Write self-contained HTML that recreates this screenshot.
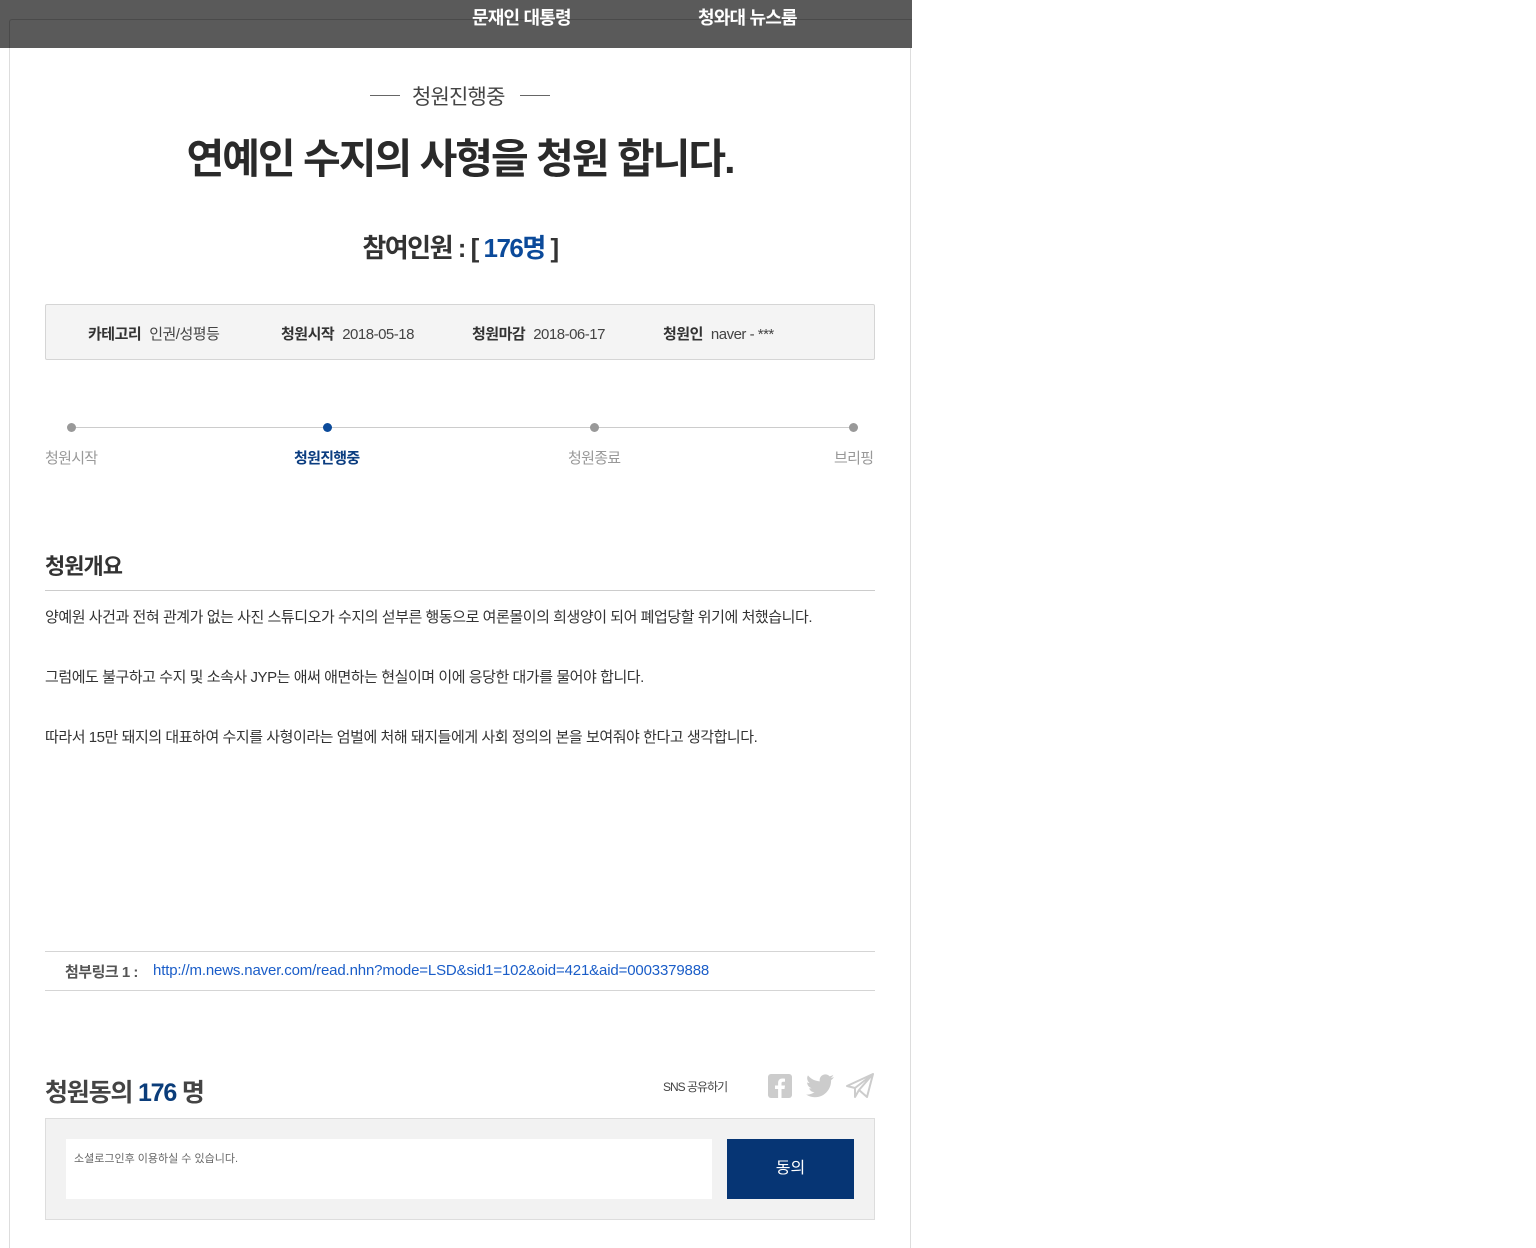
<!DOCTYPE html>
<html><head><meta charset="utf-8"><style>
*{margin:0;padding:0;box-sizing:border-box}
body{width:1536px;height:1233px;background:#fff;font-family:"Liberation Sans","Noto Sans CJK KR",sans-serif;color:#333;position:relative;overflow:hidden}
.a{position:absolute;white-space:nowrap}
.hdr{position:absolute;left:0;top:0;width:912px;height:48px;background:#5a5a5a}
.hdr .in{position:absolute;left:9px;top:19px;width:903px;height:29px;border:1px solid #4a4a4a;border-bottom:none;border-right:none;border-radius:3px 0 0 0}
.frame{position:absolute;left:9px;top:48px;width:902px;height:1200px;border-left:1px solid #ddd;border-right:1px solid #ddd}
.hd{color:#fff;font-weight:bold;font-size:18px;letter-spacing:-0.8px;top:4px}
.info{position:absolute;left:45px;top:304px;width:830px;height:56px;background:#f4f4f4;border:1px solid #d5d5d5;border-radius:2px}
.info span{position:absolute;top:18px;font-size:15px;letter-spacing:-0.5px;color:#444}
.info b{color:#333;margin-right:8px}
.dot{position:absolute;width:9px;height:9px;border-radius:50%;background:#999;top:423px}
.st{font-size:15px;color:#999;letter-spacing:-0.7px;top:447px}
.p{font-size:15px;letter-spacing:-0.45px;color:#333;left:45px}
</style></head><body>
<div class="hdr"><div class="in"></div></div>
<div class="a hd" style="left:472px">문재인 대통령</div>
<div class="a hd" style="left:698px">청와대 뉴스룸</div>
<div class="frame"></div>

<div class="a" style="left:370px;top:95px;width:30px;height:1px;background:#666"></div>
<div class="a" style="left:520px;top:95px;width:30px;height:1px;background:#666"></div>
<div class="a" style="left:412px;top:81px;font-size:21px;color:#444;letter-spacing:-0.8px">청원진행중</div>
<div class="a" style="left:0;width:920px;text-align:center;top:125px;font-size:41px;font-weight:bold;color:#2a2a2a;letter-spacing:-2px">연예인 수지의 사형을 청원 합니다.</div>
<div class="a" style="left:0;width:920px;text-align:center;top:228px;font-size:26px;font-weight:bold;color:#333;letter-spacing:-1.5px">참여인원 : [ <span style="color:#0b4a9a">176명</span> ]</div>

<div class="info">
<span style="left:42px"><b>카테고리</b>인권/성평등</span>
<span style="left:235px"><b>청원시작</b>2018-05-18</span>
<span style="left:426px"><b>청원마감</b>2018-06-17</span>
<span style="left:617px"><b>청원인</b>naver - ***</span>
</div>

<div class="a" style="left:71px;top:427px;width:782px;height:1px;background:#ccc"></div>
<div class="dot" style="left:67px"></div>
<div class="dot" style="left:323px;background:#0b4a9a"></div>
<div class="dot" style="left:590px"></div>
<div class="dot" style="left:849px"></div>
<div class="a st" style="left:45px">청원시작</div>
<div class="a st" style="left:294px;color:#0b3d80;font-weight:bold">청원진행중</div>
<div class="a st" style="left:568px">청원종료</div>
<div class="a st" style="left:834px">브리핑</div>

<div class="a" style="left:45px;top:549px;font-size:22px;font-weight:bold;color:#333;letter-spacing:-1px">청원개요</div>
<div class="a" style="left:45px;top:590px;width:830px;height:1px;background:#ccc"></div>
<div class="a p" style="top:606px">양예원 사건과 전혀 관계가 없는 사진 스튜디오가 수지의 섣부른 행동으로 여론몰이의 희생양이 되어 폐업당할 위기에 처했습니다.</div>
<div class="a p" style="top:666px">그럼에도 불구하고 수지 및 소속사 JYP는 애써 애면하는 현실이며 이에 응당한 대가를 물어야 합니다.</div>
<div class="a p" style="top:726px">따라서 15만 돼지의 대표하여 수지를 사형이라는 엄벌에 처해 돼지들에게 사회 정의의 본을 보여줘야 한다고 생각합니다.</div>

<div class="a" style="left:45px;top:951px;width:830px;height:1px;background:#d5d5d5"></div>
<div class="a" style="left:45px;top:990px;width:830px;height:1px;background:#d5d5d5"></div>
<div class="a" style="left:65px;top:961px;font-size:15px;font-weight:bold;color:#555;letter-spacing:-0.5px">첨부링크 1 :</div>
<div class="a" style="left:153px;top:962px;font-size:15px;color:#1a5dc8;letter-spacing:-0.15px">http://m.news.naver.com/read.nhn?mode=LSD&amp;sid1=102&amp;oid=421&amp;aid=0003379888</div>

<div class="a" style="left:45px;top:1073px;font-size:25px;font-weight:bold;color:#444;letter-spacing:-1.2px">청원동의 <span style="color:#0b3d7a">176</span> 명</div>
<div class="a" style="left:663px;top:1078px;font-size:12px;color:#444;letter-spacing:-1px">SNS 공유하기</div>
<svg class="a" style="left:768px;top:1074px" width="24" height="24"><rect width="24" height="24" rx="3" fill="#ccc"/><path d="M13.5 24v-9h3l.5-3.5h-3.5V9.5c0-1 .3-1.7 1.8-1.7H17V4.7c-.3 0-1.4-.2-2.6-.2-2.6 0-4.3 1.6-4.3 4.4v2.6H7V15h3.1v9z" fill="#fff"/></svg>
<svg class="a" style="left:806px;top:1074px" width="28" height="24" viewBox="0 0 24 20"><path d="M24 2.4c-.9.4-1.8.6-2.8.8 1-.6 1.8-1.6 2.2-2.7-1 .6-2 1-3.1 1.2C19.3.6 18 0 16.6 0c-2.7 0-4.9 2.2-4.900 4.9 0 .4 0 .8.1 1.1C7.7 5.8 4.1 3.900 1.7.9c-.4.7-.7 1.6-.7 2.5 0 1.7.9 3.2 2.2 4.1-.8 0-1.600-.2-2.2-.6v.1c0 2.4 1.7 4.4 3.9 4.8-.4.1-.8.2-1.3.2-.3 0-.6 0-.9-.1.6 2 2.4 3.4 4.6 3.4-1.7 1.3-3.8 2.1-6.1 2.1-.4 0-.8 0-1.2-.1C2.2 18.8 4.8 19.6 7.5 19.6c9.1 0 14-7.5 14-14v-.6c1-.7 1.8-1.6 2.5-2.6z" fill="#ccc"/></svg>
<svg class="a" style="left:846px;top:1073px" width="28" height="26" viewBox="0 0 28 26"><path d="M1 13 27 1 21 24 13 17 9 24 9 15 1 13ZM9 15 27 1M13 17 27 1" fill="none" stroke="#ccc" stroke-width="2" stroke-linejoin="round"/></svg>

<div class="a" style="left:45px;top:1118px;width:830px;height:102px;background:#f2f2f2;border:1px solid #ddd"></div>
<div class="a" style="left:66px;top:1139px;width:646px;height:60px;background:#fff"></div>
<div class="a" style="left:74px;top:1150px;font-size:11px;color:#666">소셜로그인후 이용하실 수 있습니다.</div>
<div class="a" style="left:727px;top:1139px;width:127px;height:60px;background:#063574;color:#fff;font-size:16px;text-align:center;line-height:60px">동의</div>
</body></html>
